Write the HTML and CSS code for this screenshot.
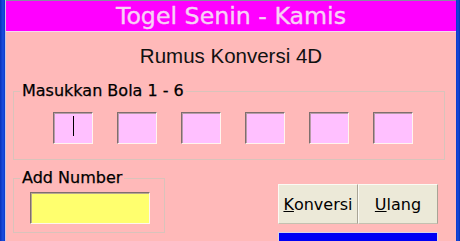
FILE: index.html
```html
<!DOCTYPE html>
<html>
<head>
<meta charset="utf-8">
<link rel="stylesheet" href="styles.css">
</head>
<body>
<div class="window">
  <div class="titlebar">Togel Senin - Kamis</div>
  <div class="client">
    <div class="heading">Rumus Konversi 4D</div>
    <fieldset class="group group-bola">
      <legend>Masukkan Bola 1 - 6</legend>
      <div class="boxes">
        <div class="box"><span class="caret"></span></div>
        <div class="box"></div>
        <div class="box"></div>
        <div class="box"></div>
        <div class="box"></div>
        <div class="box"></div>
      </div>
    </fieldset>
    <div class="bottom">
      <fieldset class="group group-add">
        <legend>Add Number</legend>
        <div class="add-body">
          <div class="yellow"></div>
        </div>
      </fieldset>
      <div class="actions">
        <div class="buttons">
          <div class="btn"><span class="u">K</span>onversi</div>
          <div class="btn"><span class="u">U</span>lang</div>
        </div>
        <div class="result"></div>
      </div>
    </div>
  </div>
</div>
</body>
</html>
```
FILE: styles.css
```css
html, body {
  margin: 0;
  padding: 0;
}
body {
  width: 460px;
  height: 241px;
  overflow: hidden;
  background: linear-gradient(90deg, #0831b8 0, #1a4ee0 3px, #0a3acb 5px, #0a3acb 456px, #1648dc 458px, #0830b0 460px);
}
.window {
  margin-left: 5px;
  width: 450px;
  height: 241px;
  border-left: 1px solid #c8c6e4;
  background: #ffb9b9;
  display: flex;
  flex-direction: column;
}
.titlebar {
  height: 30px;
  border-top: 1px solid #8a8aa4;
  border-bottom: 1px solid #f6d6f0;
  background: #ff00ff;
  color: #f8d0f6;
  font-family: "DejaVu Sans", sans-serif;
  font-size: 23.7px;
  line-height: 30px;
  text-align: center;
  -webkit-text-stroke: 0.4px #f8d0f6;
}
.client {
  flex: 1;
  display: flex;
  flex-direction: column;
  font-family: "DejaVu Sans", sans-serif;
  color: #000;
}
.heading {
  margin-top: 12px;
  font-family: "Liberation Sans", sans-serif;
  font-size: 20.5px;
  line-height: 24px;
  text-align: center;
  color: #111;
}
.group {
  margin: 0;
  padding: 0;
  border: 1px solid #d9c3bb;
  box-sizing: border-box;
}
.group legend {
  margin-left: 6px;
  padding: 0 2px;
  font-size: 16px;
  line-height: 18px;
  color: #000;
  -webkit-text-stroke: 0.25px #000;
}
.group-bola {
  margin: 14px 0 0 7px;
  width: 432px;
}
.boxes {
  display: flex;
  gap: 24px;
  padding: 12px 0 15px 39px;
}
.box {
  width: 40px;
  height: 32px;
  box-sizing: border-box;
  background: #ffc0ff;
  border: 1px solid;
  border-color: #7e6e6e #fff4ee #fff4ee #7e6e6e;
  box-shadow: inset 1px 1px 0 #b89ca8;
  display: flex;
  align-items: center;
  justify-content: center;
}
.caret {
  width: 1px;
  height: 20px;
  margin-top: -4px;
  background: #000;
}
.bottom {
  display: flex;
  align-items: flex-start;
}
.group-add {
  margin: 9px 0 0 7px;
  width: 152px;
}
.add-body {
  padding: 5px 0 8px 16px;
}
.yellow {
  width: 120px;
  height: 32px;
  box-sizing: border-box;
  background: #ffff6e;
  border: 1px solid;
  border-color: #7e6e6e #fff4ee #fff4ee #7e6e6e;
  box-shadow: inset 1px 1px 0 #b8a890;
}
.actions {
  margin: 24px 18px 0 auto;
  width: 160px;
  display: flex;
  flex-direction: column;
  gap: 8px;
}
.buttons {
  display: flex;
}
.btn {
  width: 80px;
  height: 40px;
  box-sizing: border-box;
  background: #ece9d8;
  border: 1px solid;
  border-color: #fbfaf4 #a8a496 #c4c0b0 #fbfaf4;
  display: flex;
  align-items: center;
  justify-content: center;
  font-size: 16px;
  color: #000;
}
.u {
  text-decoration: underline;
}
.result {
  height: 20px;
  box-sizing: border-box;
  background: #0000f4;
  border: 1px solid #d8d4e4;
  border-bottom: 0;
}
```
